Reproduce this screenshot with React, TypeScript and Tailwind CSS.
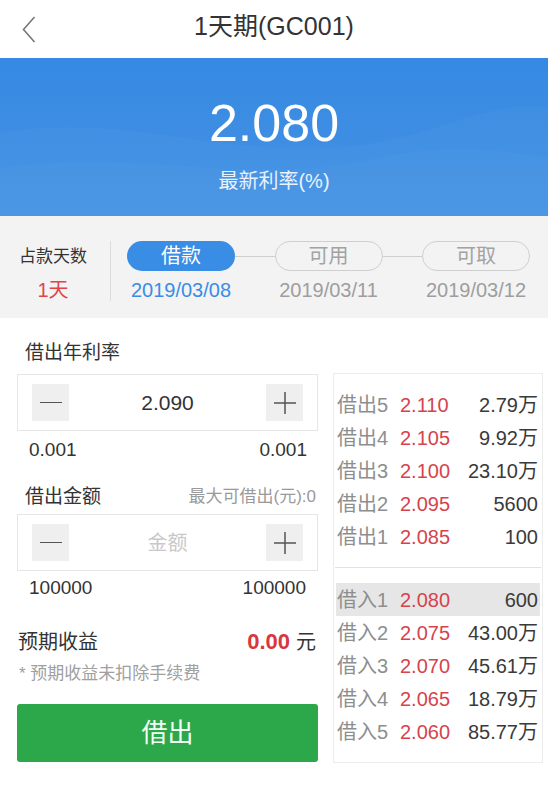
import React from "react";

const FONT = { fontFamily: '"Liberation Sans", "Noto Sans CJK SC", sans-serif' };

const sells = [
  ["借出5", "2.110", "2.79万"],
  ["借出4", "2.105", "9.92万"],
  ["借出3", "2.100", "23.10万"],
  ["借出2", "2.095", "5600"],
  ["借出1", "2.085", "100"],
];
const buys = [
  ["借入1", "2.080", "600"],
  ["借入2", "2.075", "43.00万"],
  ["借入3", "2.070", "45.61万"],
  ["借入4", "2.065", "18.79万"],
  ["借入5", "2.060", "85.77万"],
];

function Row({ r, hl }: { r: string[]; hl?: boolean }) {
  return (
    <div className={`flex h-[33px] items-center mx-[2px] pl-[1px] pr-[2px] text-[20px] ${hl ? "bg-[#e6e6e6]" : ""}`}>
      <span className="w-[63px] text-[#8e8e8e] whitespace-nowrap">{r[0]}</span>
      <span className="text-[#d6434c]">{r[1]}</span>
      <span className="ml-auto text-[#3a3a3a] whitespace-nowrap">{r[2]}</span>
    </div>
  );
}

function Minus() {
  return (
    <div className="w-[37px] h-[37px] bg-[#efefef] flex items-center justify-center">
      <div className="w-[22px] h-[1.5px] bg-[#555]" />
    </div>
  );
}
function Plus() {
  return (
    <div className="w-[37px] h-[37px] bg-[#efefef] flex items-center justify-center">
      <svg width="22" height="22" viewBox="0 0 22 22">
        <path d="M0 11 H22 M11 0 V22" stroke="#555" strokeWidth="1.5" />
      </svg>
    </div>
  );
}

function Stepper({ value, placeholder }: { value?: string; placeholder?: string }) {
  return (
    <div className="h-[57px] border border-[#e6e6e6] flex items-center justify-between px-[14px] bg-white">
      <Minus />
      {value ? (
        <span className="text-[21px] text-[#333]">{value}</span>
      ) : (
        <span className="text-[20px] text-[#c8c8c8]">{placeholder}</span>
      )}
      <Plus />
    </div>
  );
}

export default function App() {
  return (
    <div style={FONT} className="w-[548px] h-[791px] bg-white overflow-hidden">
      {/* Header */}
      <div className="h-[58px] grid grid-cols-[60px_1fr_60px] items-center bg-white">
        <div className="pl-[22px] pt-[1px]">
          <svg width="14" height="27" viewBox="0 0 14 27">
            <path d="M12.5 1 L1.5 13.5 L12.5 26" fill="none" stroke="#777" strokeWidth="1.6" />
          </svg>
        </div>
        <div className="text-center text-[25px] text-[#333] pb-[5px]">1天期(GC001)</div>
        <div />
      </div>

      {/* Banner */}
      <div className="relative h-[158px] bg-gradient-to-b from-[#3689e2] to-[#4493e4] overflow-hidden">
        <svg className="absolute inset-0" width="548" height="158" viewBox="0 0 548 158">
          <path d="M0 75 C120 55 200 95 330 90 C430 86 480 40 548 50 L548 158 L0 158 Z" fill="#ffffff" opacity="0.025" />
          <path d="M0 110 C140 90 250 130 380 100 C460 82 510 95 548 100 L548 158 L0 158 Z" fill="#ffffff" opacity="0.025" />
        </svg>
        <div className="relative flex flex-col items-center pt-[39px]">
          <div className="text-[52px] leading-[52px] text-white">2.080</div>
          <div className="mt-[20px] text-[20px] leading-[24px] text-[#e8f1fc]">最新利率(%)</div>
        </div>
      </div>

      {/* Steps */}
      <div className="h-[102px] bg-[#f3f3f3] flex">
        <div className="w-[110px] flex flex-col items-center pt-[29px]">
          <div className="text-[17px] leading-[24px] text-[#333] pr-[4px]">占款天数</div>
          <div className="mt-[9px] text-[20px] leading-[24px] text-[#e0454a] pr-[4px]">1天</div>
        </div>
        <div className="w-px h-[60px] mt-[25px] bg-[#dcdcdc]" />
        <div className="ml-[16px] w-[403px] pt-[25px] grid grid-cols-[108px_1fr_108px_1fr_108px] grid-rows-[30px_auto]">
          <div className="h-[30px] rounded-full bg-[#3a8de4] text-white text-[20px] flex items-center justify-center">借款</div>
          <div className="self-center h-px bg-[#cfcfcf]" />
          <div className="h-[30px] rounded-full border border-[#cfcfcf] text-[#a2a2a2] text-[20px] flex items-center justify-center">可用</div>
          <div className="self-center h-px bg-[#cfcfcf]" />
          <div className="h-[30px] rounded-full border border-[#cfcfcf] text-[#a2a2a2] text-[20px] flex items-center justify-center">可取</div>
          <div className="mt-[7px] text-center text-[20px] leading-[24px] text-[#3a8de4]">2019/03/08</div>
          <div />
          <div className="mt-[7px] text-center text-[20px] leading-[24px] text-[#9e9e9e] whitespace-nowrap">2019/03/11</div>
          <div />
          <div className="mt-[7px] text-center text-[20px] leading-[24px] text-[#9e9e9e] whitespace-nowrap">2019/03/12</div>
        </div>
      </div>

      {/* Main */}
      <div className="flex pl-[17px] pr-[5px] bg-white">
        <div className="w-[301px] flex flex-col">
          <div className="mt-[23px] pl-[8px] text-[19px] leading-[24px] text-[#333]">借出年利率</div>
          <div className="mt-[9px]">
            <Stepper value="2.090" />
          </div>
          <div className="mt-[7px] flex justify-between pl-[12px] pr-[11px] text-[19px] leading-[24px] text-[#333]">
            <span>0.001</span>
            <span>0.001</span>
          </div>
          <div className="mt-[23px] flex items-center justify-between pl-[8px] pr-[2px] leading-[24px]">
            <span className="text-[19px] text-[#333]">借出金额</span>
            <span className="text-[17px] text-[#9a9a9a]">最大可借出(元):0</span>
          </div>
          <div className="mt-[5px]">
            <Stepper placeholder="金额" />
          </div>
          <div className="mt-[5px] flex justify-between pl-[12px] pr-[12px] text-[19px] leading-[24px] text-[#333]">
            <span>100000</span>
            <span>100000</span>
          </div>
          <div className="mt-[30px] flex items-center justify-between pl-[1px] pr-[2px] leading-[24px]">
            <span className="text-[20px] text-[#333]">预期收益</span>
            <span className="flex items-baseline">
              <span className="text-[22px] font-bold text-[#d9363e]">0.00</span>
              <span className="ml-[6px] text-[20px] text-[#333]">元</span>
            </span>
          </div>
          <div className="mt-[8px] pl-[2px] text-[17px] leading-[24px] text-[#a0a0a0]">* 预期收益未扣除手续费</div>
          <div className="mt-[18px] h-[58px] rounded-[3px] bg-[#2ca84a] flex items-center justify-center text-[26px] text-[#f2fff4]">
            借出
          </div>
        </div>

        <div className="ml-[15px] w-[210px] mt-[55px] h-[390px] border border-[#ececec] flex flex-col pt-[14px] pb-[13px]">
          {sells.map((r) => (
            <Row key={r[0]} r={r} />
          ))}
          <div className="mt-[14px] mx-[1px] h-px bg-[#e2e2e2]" />
          <div className="mt-[15px]">
            {buys.map((r, i) => (
              <Row key={r[0]} r={r} hl={i === 0} />
            ))}
          </div>
        </div>
      </div>
    </div>
  );
}
